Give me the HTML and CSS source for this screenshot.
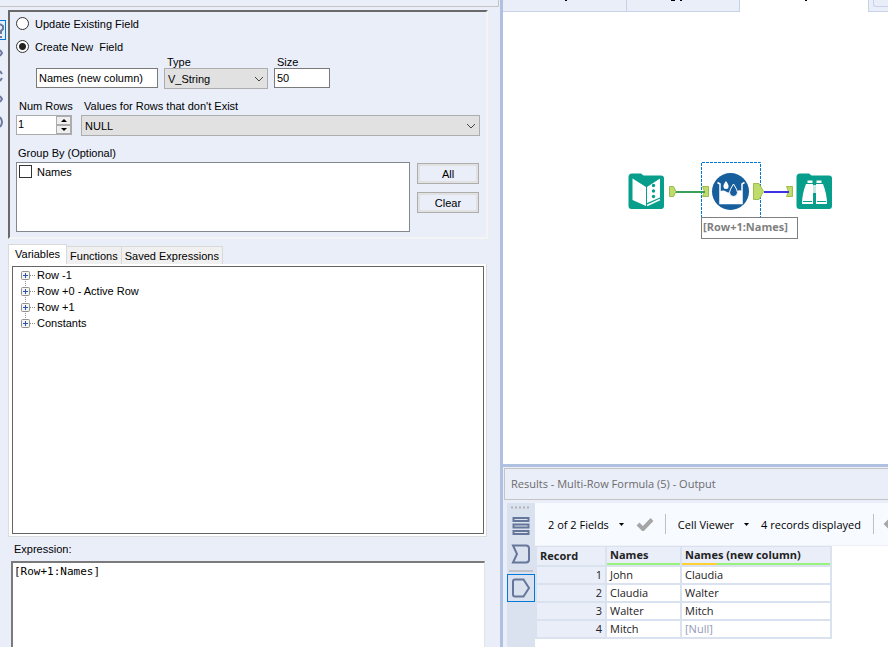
FILE: index.html
```html
<!DOCTYPE html>
<html lang="en">
<head>
  <meta charset="utf-8">
  <title>Multi-Row Formula</title>
  <link rel="stylesheet" href="styles.css">
</head>
<body>

  <!-- Configuration pane -->
  <section class="config">
    <div class="config-top"></div>
    <div class="config-body">
      <nav class="side-rail">
        <button class="rail-item active" aria-label="Configuration"><svg width="5" height="18"><path d="M0 3l3 2v3l-2 2v3M0 16h2" class="rail-line"/></svg></button>
        <button class="rail-item" aria-label="Navigation"><svg width="5" height="18"><path d="M0 6l2 3-2 3" class="rail-line"/></svg></button>
        <button class="rail-item" aria-label="XML"><svg width="5" height="18"><path d="M0 4l2 3M2 11l-2 3" class="rail-line"/></svg></button>
        <button class="rail-item" aria-label="Annotation"><svg width="5" height="18"><path d="M0 6l2 3-2 3" class="rail-line"/></svg></button>
        <button class="rail-item" aria-label="Help"><svg width="5" height="18"><path d="M0 4q4 5 0 10" class="rail-line"/></svg></button>
      </nav>

      <div class="config-main">
        <form class="settings">
          <label class="radio-row"><input type="radio" name="mode">Update Existing Field</label>
          <label class="radio-row"><input type="radio" name="mode" checked>Create New&nbsp; Field</label>

          <div class="field-row new-field">
            <input type="text" class="box name-box" value="Names (new column)" aria-label="New field name">
            <div class="field type-field">
              <label for="fieldType">Type</label>
              <div class="select-wrap">
                <select id="fieldType"><option>V_String</option></select>
                <svg class="chevron" width="10" height="6"><path d="M1 1l4 4 4-4"/></svg>
              </div>
            </div>
            <div class="field size-field">
              <label for="fieldSize">Size</label>
              <input type="text" class="box" id="fieldSize" value="50">
            </div>
          </div>

          <div class="field-row">
            <div class="field rows-field">
              <label for="numRows">Num Rows</label>
              <div class="spinner">
                <input type="text" id="numRows" value="1">
                <div class="spin-buttons">
                  <button type="button" aria-label="More"><svg width="6" height="3"><path d="M0 3l3-3 3 3z"/></svg></button>
                  <button type="button" aria-label="Fewer"><svg width="6" height="3"><path d="M0 0l3 3 3-3z"/></svg></button>
                </div>
              </div>
            </div>
            <div class="field values-field">
              <label for="missing">Values for Rows that don't Exist</label>
              <div class="select-wrap">
                <select id="missing"><option>NULL</option></select>
                <svg class="chevron" width="10" height="6"><path d="M1 1l4 4 4-4"/></svg>
              </div>
            </div>
          </div>

          <div class="group-title">Group By (Optional)</div>
          <div class="group-row">
            <div class="check-list">
              <label><input type="checkbox">Names</label>
            </div>
            <div class="group-buttons">
              <button type="button">All</button>
              <button type="button">Clear</button>
            </div>
          </div>
        </form>

        <div class="tabs">
          <button class="tab selected">Variables</button>
          <button class="tab">Functions</button>
          <button class="tab">Saved Expressions</button>
        </div>
        <div class="tab-page">
          <ul class="tree">
            <li><svg class="plus" width="14" height="16"><use href="#plus"/></svg>Row -1</li>
            <li><svg class="plus" width="14" height="16"><use href="#plus"/></svg>Row +0 - Active Row</li>
            <li><svg class="plus" width="14" height="16"><use href="#plus"/></svg>Row +1</li>
            <li><svg class="plus" width="14" height="16"><use href="#plus"/></svg>Constants</li>
          </ul>
        </div>

        <label class="expression-label" for="expression">Expression:</label>
        <textarea class="expression" id="expression" spellcheck="false">[Row+1:Names]</textarea>
      </div>
    </div>
  </section>

  <div class="workspace">
    <!-- Workflow canvas -->
    <section class="canvas">
      <div class="doc-tabs">
        <div class="doc-tab first"><svg width="2" height="1"><path d="M0 0h2v1H0z"/></svg></div>
        <div class="doc-tab second"><svg width="12" height="1"><path d="M0 0h4v1H0zM9 0h2v1H9z"/></svg></div>
        <div class="doc-tab current"><svg width="2" height="1"><path d="M0 0h2v1H0z"/></svg></div>
        <div class="doc-tab more"><span></span></div>
      </div>
      <div class="flow">
        <svg class="flow-art" width="220" height="64" viewBox="620 155 220 64">
          <!-- selection frame -->
          <path d="M701.500 218v-55.500h59V218" fill="none" stroke="#0078d7" stroke-dasharray="3 1"/>
          <!-- anchors -->
          <g fill="#bfdc6b" stroke="#9cbd52">
            <path d="M669.500 186.500h4l2.500 5-2.500 5h-4z"/>
            <path d="M702.500 186.500h6v10h-6l2-5z"/>
            <path d="M753.500 183.500h5.500l4.500 8-4.500 8h-5.500z"/>
            <path d="M786.500 186.500h6v10h-6l2-5z"/>
          </g>
          <!-- connections -->
          <path d="M676 192h29" stroke="#3a9f58" stroke-width="2"/>
          <path d="M764 192h25" stroke="#3c32e0" stroke-width="2"/>
          <!-- text input -->
          <path d="M632 173.500h9l2.500 2H661q3 0 3 3V206q0 3-3 3h-29.500q-3 0-3-3v-29q0-3.500 3.500-3.500z" fill="#079e8c"/>
          <path d="M632.500 178.500l13.500 8.500v19l-13.500-6z" fill="#fff"/>
          <path d="M647 187l13-8.500v19L647 203z" fill="#fff"/>
          <path d="M647 205.500l13-6" stroke="#fff" stroke-width="1.500"/>
          <g fill="#079e8c"><circle cx="653.500" cy="185.500" r="1.700"/><circle cx="653.500" cy="191" r="1.700"/><circle cx="653.500" cy="196.500" r="1.700"/></g>
          <!-- multi-row formula -->
          <circle cx="730.500" cy="191.500" r="18.500" fill="#175f9c"/>
          <path d="M717.500 182.500l2.500 1.500v19.500h22V184l2.500-1.500" fill="none" stroke="#fff" stroke-width="1.500"/>
          <path d="M720 191.500q3-2 6 0t5-.5h6q3-1.500 5 0v12.500h-22z" fill="#fff"/>
          <path d="M726 181q-3 4-2.500 5.500a2.500 2.500 0 0 0 5 0Q729 185 726 181z" fill="#fff"/>
          <path d="M733.500 184q-4 6-4 8.500a4 4 0 0 0 8 0q0-2.500-4-8.500z" fill="#175f9c" stroke="#fff"/>
          <!-- browse -->
          <path d="M800 173.500h9l2.500 2H829q3 0 3 3V206q0 3-3 3h-29.500q-3 0-3-3v-29q0-3.500 3.500-3.500z" fill="#079e8c"/>
          <path d="M807.500 180.500h5v2.500h-5zM816.500 180.500h5v2.500h-5zM806 184h7v20h-11q0-10 4-20zM816 184h7q4 10 4 20h-11z" fill="#fff"/>
          <path d="M813 185h3v8h-3z" fill="#c9e7e2"/>
          <path d="M803 201.500h9M817 201.500h9" stroke="#079e8c"/>
        </svg>
        <div class="annotation">[Row+1:Names]</div>
      </div>
    </section>

    <!-- Results window -->
    <section class="results">
      <h2 class="results-title">Results - Multi-Row Formula (5) - Output</h2>
      <div class="results-body">
        <nav class="results-rail">
          <svg class="grip" width="20" height="3"><path d="M0 1.500h20"/></svg>
          <button aria-label="Messages"><svg width="20" height="20"><path d="M2.500 2h15v3h-15zM2.500 8.500h15v3h-15zM2.500 15h15v3h-15z"/></svg></button>
          <button aria-label="Input"><svg width="20" height="20"><path d="M2 1.500h13q3 0 3 3v11q0 3-3 3H2l4-8.500z"/></svg></button>
          <hr>
          <button class="active" aria-label="Output"><svg width="20" height="20"><path d="M4 1.500h8.500l5.500 8.500-5.500 8.500H4q-2 0-2-2v-13q0-2 2-2z"/></svg></button>
        </nav>
        <div class="results-main">
          <div class="results-bar">
            <button class="drop">2 of 2 Fields <svg width="5" height="3"><path d="M0 0h5L2.500 3z"/></svg></button>
            <svg class="tick" width="18" height="14"><path d="M2 7l5 5 9-9.500"/></svg>
            <span class="divider"></span>
            <button class="drop viewer">Cell Viewer <svg width="5" height="3"><path d="M0 0h5L2.500 3z"/></svg></button>
            <span class="count">4 records displayed</span>
            <span class="divider"></span>
            <svg class="arrow" width="14" height="10"><path d="M6 1L2 5l4 4M2 5h12"/></svg>
          </div>
          <table class="grid">
            <thead>
              <tr>
                <th class="col-record">Record</th>
                <th class="col-names"><span class="quality ok">Names</span></th>
                <th class="col-new"><span class="quality mixed">Names (new column)</span></th>
              </tr>
            </thead>
            <tbody>
              <tr><td class="num">1</td><td>John</td><td>Claudia</td></tr>
              <tr><td class="num">2</td><td>Claudia</td><td>Walter</td></tr>
              <tr><td class="num">3</td><td>Walter</td><td>Mitch</td></tr>
              <tr><td class="num">4</td><td>Mitch</td><td class="null">[Null]</td></tr>
            </tbody>
          </table>
        </div>
      </div>
    </section>
  </div>

  <svg width="0" height="0" class="defs">
    <symbol id="plus" viewBox="0 0 14 16">
      <path d="M4.500 0v16M9 8.500h5" stroke="#909090" stroke-dasharray="1 1"/>
      <rect x=".5" y="4.500" width="8" height="8" rx="1" fill="#f4f4f4" stroke="#919191"/>
      <path d="M2 8.500h5M4.500 6v5" stroke="#3050b0"/>
    </symbol>
  </svg>
</body>
</html>
```

FILE: styles.css
```css
* {
  box-sizing: border-box;
}

body {
  margin: 0;
  height: 100vh;
  display: flex;
  overflow: hidden;
  background-color: #e9eef9;
  font-family: "Liberation Sans", Arial, sans-serif;
  font-size: 11px;
  color: #000000;
}

button, input, select, textarea {
  font: inherit;
  color: inherit;
  margin: 0;
  padding: 0;
  border-radius: 0;
}

/* Configuration pane */
.config {
  width: 503px;
  flex: none;
  display: flex;
  flex-direction: column;
  border-right: 3px solid #b0c0e0;
}

.config-top {
  height: 7px;
  flex: none;
  margin-right: 1px;
  border-right: 1px solid #c4c4c4;
  border-bottom: 1px solid #c4c4c4;
}

.config-body {
  flex: 1;
  min-height: 0;
  display: flex;
  padding-top: 3px;
}

.side-rail {
  width: 8px;
  flex: none;
  padding-top: 10px;
  display: flex;
  flex-direction: column;
  gap: 3px;
}

.rail-item {
  width: 6px;
  height: 20px;
  border: 1px solid transparent;
  border-left: none;
  background: none;
}

.rail-item.active {
  border-color: #0078d7;
}

.rail-item svg {
  display: block;
}

.rail-line {
  fill: none;
  stroke: #6b7a9c;
  stroke-width: 2;
}

.config-main {
  flex: 1;
  display: flex;
  flex-direction: column;
  padding-right: 12px;
}

.settings {
  border: 2px solid;
  border-color: #696969 #f4f4f2 #f4f4f2 #696969;
  padding: 0 6px 5px;
}

.radio-row {
  display: flex;
  align-items: center;
  gap: 6px;
  height: 23px;
}

.radio-row input {
  appearance: none;
  width: 13px;
  height: 13px;
  border: 1px solid #333333;
  border-radius: 50%;
  background-color: #ffffff;
}

.radio-row input:checked {
  background: radial-gradient(circle, #222222 3px, #ffffff 4px);
}

.field-row {
  display: flex;
  align-items: flex-end;
  margin-top: 10px;
}

.field-row.new-field {
  margin: -2px 0 0 20px;
  gap: 6px;
}

.field label {
  display: block;
  line-height: 14px;
  padding-left: 3px;
  margin-bottom: 2px;
}

.new-field .field label {
  line-height: 12px;
  margin: 0;
}

.box {
  height: 20px;
  width: 100%;
  border: 1px solid #7a7a7a;
  background-color: #ffffff;
  padding: 0 2px;
  display: block;
}

.name-box {
  width: 122px;
  margin-bottom: 1px;
}

.type-field {
  width: 104px;
}

.size-field {
  width: 56px;
  padding-bottom: 1px;
}

.select-wrap {
  position: relative;
}

select {
  appearance: none;
  display: block;
  width: 100%;
  height: 21px;
  padding: 0 3px;
  border: 1px solid #adadad;
  background-color: #e1e1e1;
}

.chevron {
  position: absolute;
  right: 4px;
  top: 8px;
  fill: none;
  stroke: #444444;
  pointer-events: none;
}

.rows-field {
  width: 65px;
}

.values-field {
  flex: 1;
}

.spinner {
  display: flex;
  width: 56px;
  height: 20px;
  margin-bottom: 1px;
  border: 1px solid #acacac;
  background-color: #ffffff;
}

.spinner input {
  flex: 1;
  min-width: 0;
  border: none;
  padding: 0 1px 2px;
}

.spin-buttons {
  display: flex;
  flex-direction: column;
  width: 15px;
}

.spin-buttons button {
  flex: 1;
  display: flex;
  align-items: center;
  justify-content: center;
  border: 1px solid #acacac;
  background-color: #efefef;
}

.group-title {
  margin-top: 10px;
  line-height: 14px;
  padding-left: 2px;
}

.group-row {
  display: flex;
  gap: 7px;
  margin-top: 2px;
}

.check-list {
  flex: 1;
  height: 70px;
  border: 1px solid #828790;
  background-color: #ffffff;
  padding: 2px;
}

.check-list label {
  display: flex;
  align-items: center;
  gap: 5px;
  line-height: 12px;
}

.check-list input {
  appearance: none;
  width: 13px;
  height: 13px;
  border: 1px solid #333333;
  background-color: #ffffff;
}

.group-buttons {
  width: 63px;
  display: flex;
  flex-direction: column;
  gap: 8px;
  padding: 1px 1px 0 0;
}

.group-buttons button {
  height: 21px;
  border: 1px solid #adadad;
  background-color: #e9eef9;
  box-shadow: inset 0 0 0 2px #e1e1e1;
}

/* Variables / Functions tabs */
.tabs {
  display: flex;
  align-items: flex-end;
  margin-top: 5px;
}

.tab {
  height: 18px;
  padding: 0 3px;
  border: 1px solid #d9d9d9;
  border-left: none;
  border-bottom: none;
  background-color: #f0f0f0;
}

.tab.selected {
  height: 20px;
  padding: 0 6px 2px;
  border-left: 1px solid #d9d9d9;
  background-color: #ffffff;
}

.tab-page {
  border: 1px solid #dcdcdc;
  border-top: none;
  background-color: #ffffff;
  margin-right: 1px;
  padding: 2px 2px 2px 3px;
}

.tree {
  list-style: none;
  margin: 0;
  padding: 0 0 0 8px;
  height: 268px;
  border: 1px solid #646464;
}

.tree li {
  display: flex;
  align-items: center;
  gap: 2px;
  height: 16px;
}

.tree li:first-child .plus {
  clip-path: inset(4px 0 0 0);
}

.tree li:last-child .plus {
  clip-path: inset(0 0 3px 0);
}

.expression-label {
  padding: 5px 0 5px 6px;
  line-height: 14px;
}

.expression {
  flex: 1;
  min-height: 0;
  margin: 0 3px 0 3px;
  border: 2px solid #7a7a7a;
  border-right: 1px solid #e3e3e3;
  border-bottom: none;
  padding: 2px 1px;
  resize: none;
  outline: none;
  background-color: #ffffff;
  font-family: "DejaVu Sans Mono", monospace;
}

/* Workflow canvas */
.workspace {
  flex: 1;
  min-width: 0;
  display: flex;
  flex-direction: column;
}

.canvas {
  flex: 1;
  position: relative;
  overflow: hidden;
  background-color: #ffffff;
}

.doc-tabs {
  display: flex;
  height: 12px;
}

.doc-tab {
  line-height: 0;
  border: 1px solid #c8d3ea;
  border-top: none;
  border-left: none;
  background-color: #e9eef9;
}

.doc-tab svg {
  display: block;
}

.doc-tab.first {
  width: 124px;
  padding-left: 62px;
}

.doc-tab.second {
  width: 113px;
  padding-left: 44px;
}

.doc-tab.current {
  width: 128px;
  padding-left: 65px;
  background: none;
  border: none;
}

.doc-tab.more {
  flex: 1;
  border-left: 1px solid #c8d3ea;
  border-right: none;
  padding-left: 4px;
}

.doc-tab.more span {
  display: block;
  height: 7px;
  border: 1px solid #c8d3ea;
  border-top: none;
  border-right: none;
  border-bottom-left-radius: 3px;
}

.flow {
  position: absolute;
  left: 117px;
  top: 155px;
}

.flow-art {
  display: block;
}

.annotation {
  position: absolute;
  left: 81px;
  top: 62px;
  width: 97px;
  height: 22px;
  padding-left: 1px;
  border: 1px solid #7f7f7f;
  background-color: #ffffff;
  font-family: "Open Sans", sans-serif;
  font-weight: bold;
  line-height: 18px;
  color: #7f7f7f;
}

/* Results window */
.results {
  height: 183px;
  flex: none;
  display: flex;
  flex-direction: column;
  border-top: 3px solid #b0c0e0;
  padding: 1px 0 0 1px;
  font-family: "Open Sans", sans-serif;
}

.results-title {
  margin: 0;
  height: 32px;
  flex: none;
  line-height: 30px;
  padding-left: 6px;
  border: 1px solid #c4c4c4;
  border-right: none;
  font-size: 11px;
  font-weight: normal;
  color: #6b6b6b;
}

.results-body {
  flex: 1;
  min-height: 0;
  display: flex;
  padding: 3px 0 0 3px;
}

.results-rail {
  width: 28px;
  flex: none;
  display: flex;
  flex-direction: column;
  align-items: center;
  background-color: #dae1ef;
  padding-top: 3px;
}

.results-rail button {
  width: 28px;
  height: 28px;
  flex: none;
  display: flex;
  align-items: center;
  justify-content: center;
  border: 1px solid transparent;
  background: none;
}

.results-rail button.active {
  border-color: #0078d7;
}

.results-rail button path {
  fill: none;
  stroke: #66769a;
  stroke-width: 2;
}

.results-rail hr {
  width: 24px;
  margin: 2px 0;
  border: none;
  border-top: 2px solid #c0c2c8;
}

.grip {
  margin-bottom: 3px;
  flex: none;
}

.grip path {
  stroke: #b4b4b4;
  stroke-width: 2;
  stroke-dasharray: 2 2;
}

.results-main {
  flex: 1;
  min-width: 0;
  background-color: #ffffff;
}

.results-bar {
  height: 43px;
  display: flex;
  align-items: center;
  padding-left: 13px;
  overflow: hidden;
  background-color: #f7faff;
  border-bottom: 1px solid #eef1f8;
  white-space: nowrap;
}

.drop {
  display: flex;
  align-items: center;
  gap: 10px;
  border: none;
  background: none;
}

.tick {
  flex: none;
  margin: 0 11px 0 12px;
  fill: none;
  stroke: #a6a6a6;
  stroke-width: 4;
}

.divider {
  width: 1px;
  height: 20px;
  flex: none;
  background-color: #c0c0c0;
}

.viewer {
  margin: 0 12px;
}

.count {
  margin-right: 12px;
}

.arrow {
  margin-left: 9px;
  flex: none;
  fill: none;
  stroke: #a6a6a6;
  stroke-width: 2;
}

.grid {
  table-layout: fixed;
  width: 297px;
  border-collapse: collapse;
  color: #222222;
}

.grid th, .grid td {
  height: 18px;
  padding: 0 3px;
  border: 2px solid #dae1ef;
  text-align: left;
  line-height: 16px;
  background-color: #ffffff;
}

.grid th, .grid .num {
  background-color: #e9eef9;
}

.grid th {
  border-width: 1px 2px;
}

.grid .num {
  text-align: right;
}

.grid .null {
  color: #9499b8;
}

.col-record {
  width: 70px;
}

.col-names {
  width: 75px;
}

.quality {
  display: block;
  margin: 0 -3px;
  padding: 0 3px;
  border-bottom: 2px solid #98f27c;
}

.quality.mixed {
  border-image: linear-gradient(to right, #ffd034 24%, #98f27c 24%) 1;
  border-image-width: 0 0 2px 0;
}

.defs {
  position: absolute;
}
```
